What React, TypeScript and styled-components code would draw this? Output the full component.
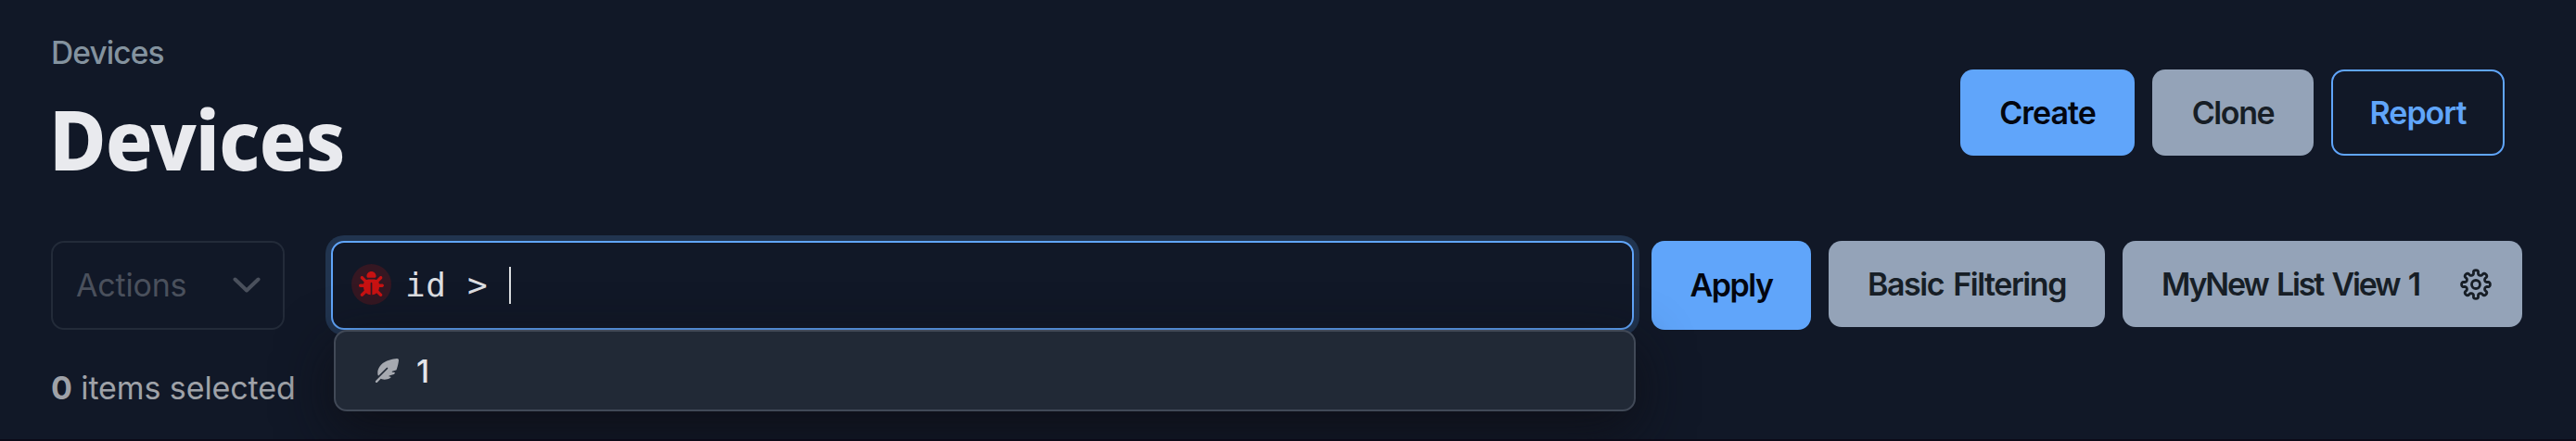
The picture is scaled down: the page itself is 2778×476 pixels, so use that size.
import React from "react";
import styled, { createGlobalStyle, css } from "styled-components";
import { FaBug, FaFeatherPointed } from "react-icons/fa6";

const Global = createGlobalStyle`
  body { margin: 0; background: #111827; }
  * { box-sizing: border-box; }
`;

const Page = styled.main`
  height: 476px;
  background: #111827;
  border-bottom: 2px solid #0b0a18;
  font-family: Inter, "Liberation Sans", sans-serif;
  font-size: 34px;
  letter-spacing: -0.2px;
  overflow: hidden;
  padding: 0 58px 0 55px;
`;

const Header = styled.header`
  display: flex;
  justify-content: space-between;
  height: 260px;
`;

const Breadcrumb = styled.nav`
  margin-top: 37px;
  line-height: 40px;
  font-size: 33.5px;
  font-weight: 500;
  letter-spacing: -0.9px;
  color: #84939f;
`;

const Title = styled.h1`
  width: max-content;
  margin: 17px 0 0 -2px;
  font: 800 90px/110px "Noto Sans", sans-serif;
  letter-spacing: -1px;
  color: #e9eaee;
  transform: scaleX(0.935);
  transform-origin: left;
`;

const HeaderActions = styled.div`
  display: flex;
  gap: 19px;
  padding: 75px 19px 0 0;
`;

type Kind = "primary" | "secondary" | "outline";

const kinds = {
  primary: css`background: #60a5fa; color: #03060f;`,
  secondary: css`background: #94a3b8; color: #171e26;`,
  outline: css`background: transparent; color: #60a5fa; border: 2px solid #60a5fa;`,
};

const Button = styled.button<{ $kind: Kind; $width: number; $tall?: boolean; $tracking?: number }>`
  display: flex;
  align-items: center;
  justify-content: center;
  flex: none;
  width: ${(p) => p.$width}px;
  height: ${(p) => (p.$tall ? 96 : 93)}px;
  padding: 0;
  border: 0;
  border-radius: 14px;
  font: 600 34px/44px Inter, sans-serif;
  letter-spacing: ${(p) => p.$tracking ?? -1}px;
  word-spacing: 3px;
  white-space: nowrap;
  ${(p) => kinds[p.$kind]}
`;

const Toolbar = styled.div`
  display: flex;
  align-items: flex-start;
  height: 96px;
`;

const ActionSelect = styled.div`
  display: flex;
  align-items: center;
  justify-content: space-between;
  width: 252px;
  height: 96px;
  margin-right: 50px;
  padding: 0 24px 1px 25px;
  border: 2px solid #232b39;
  border-radius: 14px;
  color: #4a505c;
`;

const Search = styled.div`
  position: relative;
  width: 1405px;
  margin-right: 19px;
`;

const QueryField = styled.div`
  display: flex;
  align-items: center;
  height: 96px;
  padding-left: 20px;
  border: 2px solid #60a5fa;
  border-radius: 14px;
  background: #111827;
  box-shadow: 0 0 0 6px #21344f;
  font: 36px/44px "DejaVu Sans Mono", monospace;
  letter-spacing: 0.7px;
  color: #dcdee1;
  white-space: pre;
`;

const BugBadge = styled.span`
  display: grid;
  place-items: center;
  width: 43px;
  height: 44px;
  margin: 0 15px 3px 0;
  border-radius: 50%;
  background: #351722;
  color: #c81212;
`;

const Caret = styled.span`
  width: 2px;
  height: 40px;
  background: #dcdee1;
`;

const Suggestions = styled.div`
  position: absolute;
  top: 96px;
  left: 3px;
  display: flex;
  align-items: center;
  gap: 19px;
  width: 1404px;
  height: 88px;
  padding-left: 42px;
  border: 2px solid #414957;
  border-radius: 14px;
  background: #212936;
  box-shadow: 0 20px 60px rgba(14, 14, 20, 0.8);
  font-weight: 500;
  color: #e4e5e8;
`;

const ViewButtons = styled.div`
  display: flex;
  gap: 19px;
`;

const Selected = styled.p`
  margin: 41px 0 0;
  line-height: 44px;
  letter-spacing: -0.1px;
  color: #9fa2a8;
`;

const Gear = () => {
  const points = Array.from({ length: 145 }, (_, i) => {
    const a = (i / 144) * Math.PI * 2;
    const r = 13 + 2.4 * Math.cos(a * 8);
    const t = a + 0.055 * Math.sin(a * 16);
    return `${(17 + r * Math.cos(t)).toFixed(2)},${(17 + r * Math.sin(t)).toFixed(2)}`;
  }).join(" ");
  return (
    <svg width="34" height="34" viewBox="0 0 34 34" fill="none" stroke="currentColor" strokeWidth="2.8">
      <polygon points={points} strokeLinejoin="round" />
      <circle cx="17" cy="17" r="4.5" />
    </svg>
  );
};

const ListView = styled.span`
  display: flex;
  align-items: center;
  justify-content: space-between;
  width: 100%;
  padding: 0 33px 0 42px;
`;

export default function App() {
  return (
    <Page>
      <Global />
      <Header>
        <div>
          <Breadcrumb>Devices</Breadcrumb>
          <Title>Devices</Title>
        </div>
        <HeaderActions>
          <Button $kind="primary" $width={188}>Create</Button>
          <Button $kind="secondary" $width={174} $tracking={-1.4}>Clone</Button>
          <Button $kind="outline" $width={187} $tracking={-1}>Report</Button>
        </HeaderActions>
      </Header>
      <Toolbar>
        <ActionSelect>
          <span>Actions</span>
          <svg width="30" height="18" viewBox="0 0 30 18" fill="none" stroke="currentColor" strokeWidth="4" strokeLinecap="round" strokeLinejoin="round">
            <path d="M2.5 2.5 15 14.5 27.5 2.5" />
          </svg>
        </ActionSelect>
        <Search>
          <QueryField>
            <BugBadge><FaBug size={27} /></BugBadge>
            <span>{"id > "}</span>
            <Caret />
          </QueryField>
          <Suggestions>
            <FaFeatherPointed size={26} color="#a6a9b0" />
            <span>1</span>
          </Suggestions>
        </Search>
        <ViewButtons>
          <Button $kind="primary" $width={172} $tall $tracking={-1.5}>Apply</Button>
          <Button $kind="secondary" $width={298} $tracking={-1.45}>Basic Filtering</Button>
          <Button $kind="secondary" $width={431} $tracking={-2.2}>
            <ListView>MyNew List View 1 <Gear /></ListView>
          </Button>
        </ViewButtons>
      </Toolbar>
      <Selected><b>0</b> items selected</Selected>
    </Page>
  );
}
